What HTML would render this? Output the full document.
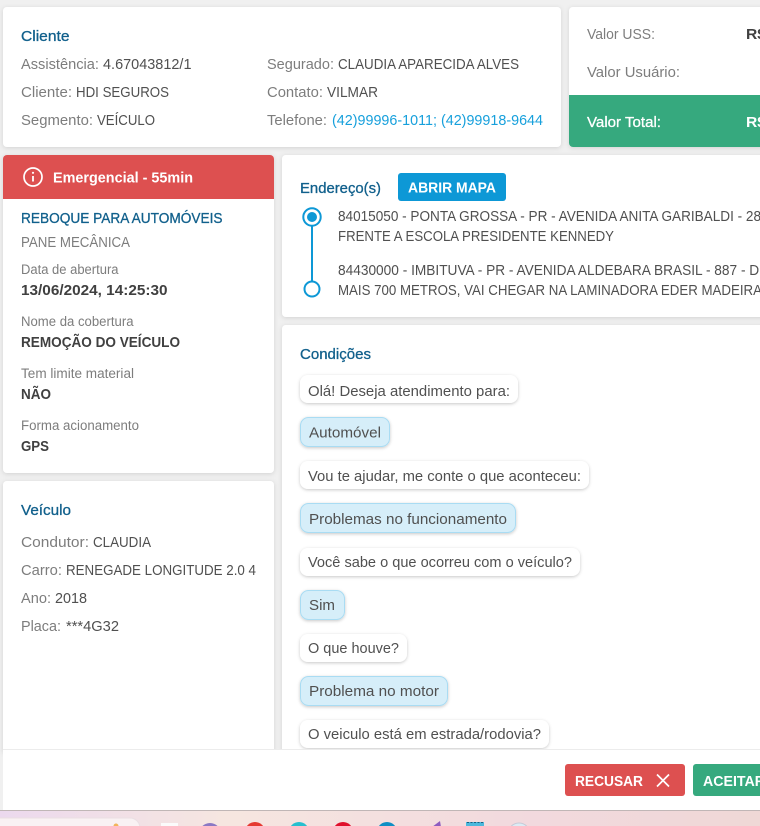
<!DOCTYPE html>
<html lang="pt-BR"><head><meta charset="utf-8"><title>Atendimento</title>
<style>
html,body{margin:0;padding:0;width:760px;height:826px;overflow:hidden;background:#f0f0f0}
svg{display:block}
text{font-family:"Liberation Sans",sans-serif;font-size:15px;fill:#505050}
.l{fill:#7d7d7d}.h{fill:#11608c;stroke:#11608c;stroke-width:.3}.b{font-weight:700;fill:#404040}.s{font-size:13.5px;fill:#7d7d7d}.w{fill:#fff;font-weight:700}.c{fill:#17a0dc}
.card{fill:#fff;filter:url(#sh)}
.wb{fill:#fff;filter:url(#bs)}.bb{fill:#d6eef9;stroke:#a9dcf3;stroke-width:1;filter:url(#bs)}
</style></head><body>
<svg width="760" height="826" viewBox="0 0 760 826" xmlns="http://www.w3.org/2000/svg">
<defs>
<filter id="sh" x="-5%" y="-5%" width="110%" height="110%"><feDropShadow dx="0" dy="1" stdDeviation="2.5" flood-color="#000" flood-opacity=".13"/></filter>
<filter id="bs" x="-10%" y="-20%" width="120%" height="150%"><feDropShadow dx="0" dy="1" stdDeviation="1.5" flood-color="#000" flood-opacity=".22"/></filter>
<linearGradient id="tb" x1="0" x2="1" y1="0" y2="0"><stop offset="0" stop-color="#ecd9ee"/><stop offset=".3" stop-color="#f6e6e0"/><stop offset=".7" stop-color="#f2d9de"/><stop offset="1" stop-color="#efd8d6"/></linearGradient>
</defs>
<rect width="760" height="826" fill="#f0f0f0"/>

<rect class="card" x="3" y="7" width="558" height="140" rx="4"/>
<rect class="card" x="569" y="7" width="200" height="140" rx="4"/>
<path d="M569 95H770V147H573a4 4 0 0 1-4-4Z" fill="#36a97e"/>
<rect class="card" x="3" y="155" width="271" height="318" rx="4"/>
<path d="M3 199V159a4 4 0 0 1 4-4H270a4 4 0 0 1 4 4V199Z" fill="#dd5050"/>
<rect class="card" x="3" y="481" width="271" height="272" rx="4"/>
<rect class="card" x="282" y="155" width="490" height="162" rx="4"/>
<rect class="card" x="282" y="325" width="490" height="428" rx="4"/>

<text class="h" x="21" y="41" textLength="48.5" lengthAdjust="spacingAndGlyphs">Cliente</text>
<text class="l" x="21" y="69" textLength="78" lengthAdjust="spacingAndGlyphs">Assistência:</text>
<text x="103" y="69" textLength="88.5" lengthAdjust="spacingAndGlyphs">4.67043812/1</text>
<text class="l" x="21" y="97" textLength="51" lengthAdjust="spacingAndGlyphs">Cliente:</text>
<text x="76" y="97" textLength="93" lengthAdjust="spacingAndGlyphs">HDI SEGUROS</text>
<text class="l" x="21" y="125" textLength="72" lengthAdjust="spacingAndGlyphs">Segmento:</text>
<text x="97" y="125" textLength="58" lengthAdjust="spacingAndGlyphs">VEÍCULO</text>
<text class="l" x="267" y="69" textLength="67" lengthAdjust="spacingAndGlyphs">Segurado:</text>
<text x="338" y="69" textLength="181" lengthAdjust="spacingAndGlyphs">CLAUDIA APARECIDA ALVES</text>
<text class="l" x="267" y="97" textLength="56" lengthAdjust="spacingAndGlyphs">Contato:</text>
<text x="327" y="97" textLength="51" lengthAdjust="spacingAndGlyphs">VILMAR</text>
<text class="l" x="267" y="125" textLength="60" lengthAdjust="spacingAndGlyphs">Telefone:</text>
<text class="c" x="332" y="125" textLength="211" lengthAdjust="spacingAndGlyphs">(42)99996-1011; (42)99918-9644</text>

<text class="l" x="587" y="39" textLength="68" lengthAdjust="spacingAndGlyphs">Valor USS:</text>
<text class="b" x="746" y="39" textLength="20" lengthAdjust="spacingAndGlyphs">R$</text>
<text class="l" x="587" y="77" textLength="93" lengthAdjust="spacingAndGlyphs">Valor Usuário:</text>
<text x="587" y="127" textLength="74" lengthAdjust="spacingAndGlyphs" style="fill:#fff;stroke:#fff;stroke-width:.3">Valor Total:</text>
<text class="w" x="746" y="127" textLength="20" lengthAdjust="spacingAndGlyphs">R$</text>

<circle cx="33" cy="177" r="9" fill="none" stroke="#fff" stroke-width="1.7"/>
<path d="M33 176v5.5" stroke="#fff" stroke-width="1.8"/><circle cx="33" cy="172.8" r="1.1" fill="#fff"/>
<text class="w" x="53" y="182.5" textLength="140" lengthAdjust="spacingAndGlyphs">Emergencial - 55min</text>
<text class="h" x="21" y="223" textLength="201.5" lengthAdjust="spacingAndGlyphs">REBOQUE PARA AUTOMÓVEIS</text>
<text class="l" x="21" y="247" textLength="109" lengthAdjust="spacingAndGlyphs">PANE MECÂNICA</text>
<text class="s" x="21" y="274" textLength="97.5" lengthAdjust="spacingAndGlyphs">Data de abertura</text>
<text class="b" x="21" y="295" textLength="146.5" lengthAdjust="spacingAndGlyphs">13/06/2024, 14:25:30</text>
<text class="s" x="21" y="326" textLength="112.5" lengthAdjust="spacingAndGlyphs">Nome da cobertura</text>
<text class="b" x="21" y="347" textLength="159" lengthAdjust="spacingAndGlyphs">REMOÇÃO DO VEÍCULO</text>
<text class="s" x="21" y="378" textLength="113" lengthAdjust="spacingAndGlyphs">Tem limite material</text>
<text class="b" x="21" y="399" textLength="30" lengthAdjust="spacingAndGlyphs">NÃO</text>
<text class="s" x="21" y="430" textLength="118" lengthAdjust="spacingAndGlyphs">Forma acionamento</text>
<text class="b" x="21" y="451" textLength="28" lengthAdjust="spacingAndGlyphs">GPS</text>

<text class="h" x="21" y="515" textLength="50" lengthAdjust="spacingAndGlyphs">Veículo</text>
<text class="l" x="21" y="547" textLength="68" lengthAdjust="spacingAndGlyphs">Condutor:</text>
<text x="93" y="547" textLength="58" lengthAdjust="spacingAndGlyphs">CLAUDIA</text>
<text class="l" x="21" y="575" textLength="41" lengthAdjust="spacingAndGlyphs">Carro:</text>
<text x="66" y="575" textLength="190" lengthAdjust="spacingAndGlyphs">RENEGADE LONGITUDE 2.0 4</text>
<text class="l" x="21" y="603" textLength="30" lengthAdjust="spacingAndGlyphs">Ano:</text>
<text x="55" y="603" textLength="32" lengthAdjust="spacingAndGlyphs">2018</text>
<text class="l" x="21" y="631" textLength="40" lengthAdjust="spacingAndGlyphs">Placa:</text>
<text x="66" y="631" textLength="53" lengthAdjust="spacingAndGlyphs">***4G32</text>

<text class="h" x="300" y="193" textLength="81" lengthAdjust="spacingAndGlyphs">Endereço(s)</text>
<rect x="398" y="173" width="108" height="28" rx="3" fill="#0d98d6"/>
<text class="w" x="408" y="192.5" textLength="88" lengthAdjust="spacingAndGlyphs">ABRIR MAPA</text>
<path d="M312 226V281" stroke="#0d98d6" stroke-width="2"/>
<circle cx="312" cy="217" r="8.7" fill="#fff" stroke="#0d98d6" stroke-width="2"/><circle cx="312" cy="217" r="5" fill="#0d98d6"/>
<circle cx="312" cy="289" r="7.5" fill="#fff" stroke="#0d98d6" stroke-width="2"/>
<text x="338" y="221" textLength="423" lengthAdjust="spacingAndGlyphs">84015050 - PONTA GROSSA - PR - AVENIDA ANITA GARIBALDI - 28</text>
<text x="338" y="241" textLength="276" lengthAdjust="spacingAndGlyphs">FRENTE A ESCOLA PRESIDENTE KENNEDY</text>
<text x="338" y="275" textLength="425" lengthAdjust="spacingAndGlyphs">84430000 - IMBITUVA - PR - AVENIDA ALDEBARA BRASIL - 887 - DI</text>
<text x="338" y="295" textLength="424" lengthAdjust="spacingAndGlyphs">MAIS 700 METROS, VAI CHEGAR NA LAMINADORA EDER MADEIRA</text>

<text class="h" x="300" y="359" textLength="71" lengthAdjust="spacingAndGlyphs">Condições</text>
<rect class="wb" x="300" y="375" width="218" height="28" rx="8"/>
<text x="308" y="396" textLength="202" lengthAdjust="spacingAndGlyphs">Olá! Deseja atendimento para:</text>
<rect class="bb" x="300.5" y="417.5" width="89" height="29" rx="8"/>
<text x="309" y="437.5" textLength="72" lengthAdjust="spacingAndGlyphs">Automóvel</text>
<rect class="wb" x="300" y="461" width="289" height="28" rx="8"/>
<text x="308" y="481" textLength="273" lengthAdjust="spacingAndGlyphs">Vou te ajudar, me conte o que aconteceu:</text>
<rect class="bb" x="300.5" y="503.5" width="215" height="29" rx="8"/>
<text x="309" y="524" textLength="198" lengthAdjust="spacingAndGlyphs">Problemas no funcionamento</text>
<rect class="wb" x="300" y="548" width="280" height="28" rx="8"/>
<text x="308" y="567" textLength="264" lengthAdjust="spacingAndGlyphs">Você sabe o que ocorreu com o veículo?</text>
<rect class="bb" x="300.5" y="590.5" width="44" height="29" rx="8"/>
<text x="309" y="610" textLength="26" lengthAdjust="spacingAndGlyphs">Sim</text>
<rect class="wb" x="300" y="634" width="107" height="28" rx="8"/>
<text x="308" y="653" textLength="91" lengthAdjust="spacingAndGlyphs">O que houve?</text>
<rect class="bb" x="300.5" y="676.5" width="147" height="29" rx="8"/>
<text x="309" y="696" textLength="130" lengthAdjust="spacingAndGlyphs">Problema no motor</text>
<rect class="wb" x="300" y="720" width="249" height="28" rx="8"/>
<text x="308" y="739" textLength="233" lengthAdjust="spacingAndGlyphs">O veiculo está em estrada/rodovia?</text>

<rect x="3" y="750" width="757" height="60" fill="#fff"/>
<rect x="3" y="749" width="757" height="1" fill="#ececec"/>
<rect x="565" y="764" width="120" height="32" rx="3" fill="#dd5050"/>
<text class="w" x="575" y="786" textLength="68" lengthAdjust="spacingAndGlyphs">RECUSAR</text>
<path d="M657 774.5L669 786.5M669 774.5L657 786.5" stroke="#fff" stroke-width="1.7" fill="none"/>
<rect x="693" y="764" width="90" height="32" rx="3" fill="#36a97e"/>
<text class="w" x="703" y="786" textLength="62" lengthAdjust="spacingAndGlyphs">ACEITAR</text>

<rect x="0" y="810" width="760" height="16" fill="url(#tb)"/>
<rect x="0" y="810" width="760" height="1" fill="#c0b6b6"/>
<rect x="-20" y="818" width="160" height="20" rx="10" fill="#f9f1f3" stroke="#eadfe3"/>
<circle cx="116" cy="826" r="2.5" fill="#f3b45a"/>
<rect x="161" y="823" width="17" height="5" fill="#fbfbfb"/>
<circle cx="210" cy="834" r="11" fill="#8b78c4"/>
<circle cx="255" cy="832" r="10" fill="#e53a32"/>
<circle cx="299" cy="832" r="10" fill="#27bfcf"/>
<circle cx="343" cy="832" r="10" fill="#e0102c"/>
<circle cx="387" cy="832" r="10" fill="#0f8fc4"/>
<path d="M440 821L441 827H432Z" fill="#8e5cc0"/>
<rect x="466" y="822" width="18" height="6" fill="#4cb8dc"/>
<path d="M467 822.5h16" stroke="#1d5f80" stroke-width="1" stroke-dasharray="2 1.5"/>
<circle cx="519" cy="834" r="11" fill="#dcecf5" stroke="#c5c9d6"/>
</svg>
</body></html>
